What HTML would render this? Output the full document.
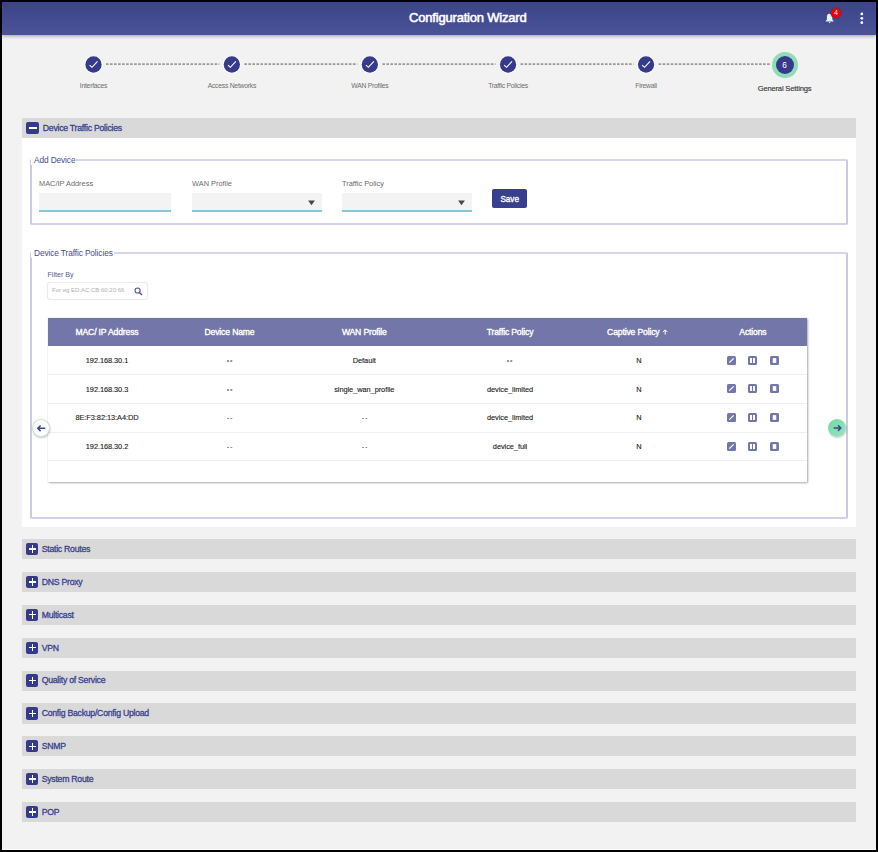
<!DOCTYPE html>
<html><head><meta charset="utf-8">
<style>
*{box-sizing:border-box;margin:0;padding:0}
html,body{width:878px;height:852px;overflow:hidden;background:#000;font-family:"Liberation Sans",sans-serif;font-variant-ligatures:none}
.a{position:absolute}
#page{position:absolute;left:2px;top:2px;width:874px;height:848px;background:#f2f2f2;border-bottom:1px solid #fff}
#hdr{position:absolute;left:2px;top:2px;width:874px;height:32.5px;background:linear-gradient(#3a4288,#4c5499);box-shadow:0 1.5px 3.5px rgba(0,0,0,.32)}
#title{position:absolute;left:405.3px;top:0;width:121px;text-align:center;white-space:nowrap;line-height:32px;color:#fff;font-weight:400;font-size:13px;letter-spacing:-0.2px;-webkit-text-stroke:0.55px #fff}
.step{position:absolute;width:17px;height:17px;border-radius:50%;background:#353b8a;box-shadow:0 0 0 1px #fff}
.step svg{position:absolute;left:0;top:0}
.dash{position:absolute;height:2px;background:repeating-linear-gradient(90deg,#999 0 2.6px,transparent 2.6px 4.05px)}
.lbl{position:absolute;width:120px;text-align:center;font-size:6.8px;letter-spacing:-0.25px;color:#6e6e6e;white-space:nowrap}
.sec{position:absolute;left:22px;width:833.7px;height:20.2px;background:#d9d9d9}
.sec .ic{position:absolute;left:4.2px;top:3.8px;width:12.2px;height:12.3px;border-radius:2px;background:#353b8a}
.sec .t{position:absolute;left:19.7px;top:-0.2px;line-height:20px;font-size:8.7px;font-weight:400;letter-spacing:-0.25px;color:#3a4190;-webkit-text-stroke:0.3px #3a4190;white-space:nowrap}
.plus:before{content:"";position:absolute;left:2.4px;top:5.5px;width:7.4px;height:1.3px;background:#fff}
.plus:after{content:"";position:absolute;left:5.45px;top:2.45px;width:1.3px;height:7.4px;background:#fff}
.minus{width:12.9px!important}.minus:before{content:"";position:absolute;left:2.7px;top:5.6px;width:7.8px;height:1.2px;background:#fff}
#body{position:absolute;left:22px;top:138px;width:834px;height:389px;background:#fff}
.fs{position:absolute;border:2px solid;border-color:#d6d7ea #c9cbe3 #d2d3e8 #c9cbe3;border-radius:2px}
.legend{position:absolute;background:#fff;padding:0 1px 0 3px;font-size:8.3px;letter-spacing:-0.1px;color:#454c94;white-space:nowrap}
.flbl{position:absolute;font-size:7.4px;color:#6a6a6a;white-space:nowrap}
.inp{position:absolute;height:18.5px;background:#f3f3f3;border-bottom:2px solid #86c6dd}
.tri{position:absolute;width:0;height:0;border-left:3.4px solid transparent;border-right:3.4px solid transparent;border-top:4.8px solid #474747}
#save{position:absolute;left:492px;top:189px;width:35px;height:19px;border-radius:2px;background:#383f8e;color:#fff;font-weight:400;font-size:9.4px;-webkit-text-stroke:0.35px #fff;text-align:center;line-height:19.1px}
#save span{display:inline-block;transform:scaleX(0.87)}
#tbl{position:absolute;left:47.5px;top:318px;width:759.5px;height:163.5px;background:#fff;box-shadow:0.5px 1px 2px rgba(0,0,0,.32),0 0 1px rgba(0,0,0,.15)}
#thead{position:absolute;left:0;top:0;width:100%;height:28px;background:#7276a8}
.th{position:absolute;top:0.4px;line-height:28px;color:#fff;font-weight:400;font-size:8.6px;letter-spacing:-0.15px;-webkit-text-stroke:0.35px #fff;white-space:nowrap;width:140px;margin-left:-70px;text-align:center}
.row{position:absolute;left:0;width:100%;height:29px;border-bottom:1px solid #f0f0f0}
.td{position:absolute;top:0.8px;line-height:28px;color:#222;font-size:7.4px;letter-spacing:-0.06px;-webkit-text-stroke:0.12px #222;white-space:nowrap;width:140px;margin-left:-70px;text-align:center}
.act{position:absolute;top:9.5px;width:9px;height:9px;border-radius:1.5px;background:#7276a8}
</style></head><body>
<div id="page"></div>
<div id="hdr"><div id="title">Configuration Wizard</div>
<svg class="a" style="left:823px;top:11.3px" width="10" height="11" viewBox="0 0 10 11"><path d="M4.6 0.8c-1.7 0-2.7 1.3-2.7 3v2.7L0.4 8.4h8.4L7.3 6.5V3.8C7.3 2.1 6.3 0.8 4.6 0.8z" fill="#e3f5f8"/><path d="M3.6 8.9h2L4.6 10.2z" fill="#e3f5f8"/></svg>
<svg class="a" style="left:828px;top:4.6px" width="12" height="12" viewBox="0 0 12 12"><circle cx="6" cy="6" r="5.4" fill="#f20000" stroke="#34407f" stroke-width="0.7"/></svg>
<div class="a" style="left:828px;top:4.6px;width:12px;height:12px;color:#fff;font-size:6.5px;font-weight:400;text-align:center;line-height:12px">4</div>
<svg class="a" style="left:857px;top:9px" width="6" height="16" viewBox="0 0 6 16"><circle cx="2.8" cy="2.9" r="1.4" fill="#fff"/><circle cx="2.8" cy="7.3" r="1.4" fill="#fff"/><circle cx="2.8" cy="11.7" r="1.4" fill="#fff"/></svg>
</div>
<svg class="a" style="left:0;top:40px" width="878" height="50" viewBox="0 40 878 50"><line x1="106.00" y1="64.1" x2="219.35" y2="64.1" stroke="#999" stroke-width="1.8" stroke-dasharray="2.6 1.42"/><line x1="244.35" y1="64.1" x2="357.35" y2="64.1" stroke="#999" stroke-width="1.8" stroke-dasharray="2.6 1.42"/><line x1="382.35" y1="64.1" x2="495.55" y2="64.1" stroke="#999" stroke-width="1.8" stroke-dasharray="2.6 1.42"/><line x1="520.55" y1="64.1" x2="633.55" y2="64.1" stroke="#999" stroke-width="1.8" stroke-dasharray="2.6 1.42"/><line x1="658.55" y1="64.1" x2="770.10" y2="64.1" stroke="#999" stroke-width="1.8" stroke-dasharray="2.6 1.42"/><circle cx="93.5" cy="64.5" r="9.1" fill="#fff" opacity="0.9"/><circle cx="93.5" cy="64.5" r="8.15" fill="#353b8a"/><path d="M89.60 65.05L92.00 67.30L97.50 61.40" fill="none" stroke="#fff" stroke-width="1.1"/><circle cx="231.85" cy="64.5" r="9.1" fill="#fff" opacity="0.9"/><circle cx="231.85" cy="64.5" r="8.15" fill="#353b8a"/><path d="M227.95 65.05L230.35 67.30L235.85 61.40" fill="none" stroke="#fff" stroke-width="1.1"/><circle cx="369.85" cy="64.5" r="9.1" fill="#fff" opacity="0.9"/><circle cx="369.85" cy="64.5" r="8.15" fill="#353b8a"/><path d="M365.95 65.05L368.35 67.30L373.85 61.40" fill="none" stroke="#fff" stroke-width="1.1"/><circle cx="508.05" cy="64.5" r="9.1" fill="#fff" opacity="0.9"/><circle cx="508.05" cy="64.5" r="8.15" fill="#353b8a"/><path d="M504.15 65.05L506.55 67.30L512.05 61.40" fill="none" stroke="#fff" stroke-width="1.1"/><circle cx="646.05" cy="64.5" r="9.1" fill="#fff" opacity="0.9"/><circle cx="646.05" cy="64.5" r="8.15" fill="#353b8a"/><path d="M642.15 65.05L644.55 67.30L650.05 61.40" fill="none" stroke="#fff" stroke-width="1.1"/></svg>
<div class="lbl" style="left:33.5px;top:81.5px">Interfaces</div>
<div class="lbl" style="left:171.85px;top:81.5px">Access Networks</div>
<div class="lbl" style="left:309.85px;top:81.5px">WAN Profiles</div>
<div class="lbl" style="left:448.05px;top:81.5px">Traffic Policies</div>
<div class="lbl" style="left:586.05px;top:81.5px">Firewall</div>
<div class="a" style="left:771.5px;top:52.2px;width:26px;height:26px;border-radius:50%;background:#8fdcb7"></div>
<div class="a" style="left:775.5px;top:56.2px;width:18px;height:18px;border-radius:50%;background:#353b8a;color:#fff;font-size:8.3px;text-align:center;line-height:18px">6</div>
<div class="lbl" style="left:724.5px;top:83.6px;font-size:7.6px;letter-spacing:-0.18px;color:#383838;-webkit-text-stroke:0.15px #383838">General Settings</div>
<div class="sec" style="top:118px"><div class="ic minus"></div><div class="t" style="left:20.8px">Device Traffic Policies</div></div>
<div id="body"></div>
<div class="fs" style="left:30px;top:159px;width:818px;height:65.5px"></div>
<div class="legend" style="left:31px;top:155.3px">Add Device</div>
<div class="flbl" style="left:39px;top:178.6px">MAC/IP Address</div>
<div class="inp" style="left:39px;top:193px;width:132px"></div>
<div class="flbl" style="left:192px;top:178.6px">WAN Profile</div>
<div class="inp" style="left:192px;top:193px;width:130px"><svg class="a" style="left:115px;top:6.5px" width="9" height="6" viewBox="0 0 9 6"><path d="M1.1 0.5H7.9L4.5 5.3z" fill="#474747"/></svg></div>
<div class="flbl" style="left:342px;top:178.6px">Traffic Policy</div>
<div class="inp" style="left:342px;top:193px;width:130px"><svg class="a" style="left:115px;top:6.5px" width="9" height="6" viewBox="0 0 9 6"><path d="M1.1 0.5H7.9L4.5 5.3z" fill="#474747"/></svg></div>
<div id="save"><span>Save</span></div>
<div class="fs" style="left:30px;top:252px;width:818px;height:267px"></div>
<div class="legend" style="left:31px;top:248.3px">Device Traffic Policies</div>
<div class="flbl" style="left:47.5px;top:270.6px;font-size:7.1px;color:#535b9c">Filter By</div>
<div class="a" style="left:47px;top:282.4px;width:100.5px;height:17.6px;border:1px solid #ececec;border-radius:3px;background:#fff;box-shadow:0 0 1px rgba(0,0,0,.08)"></div>
<div class="a" style="left:52px;top:287px;font-size:6px;color:#afafaf;white-space:nowrap">For eg ED:AC:CB:60:20:66</div>
<svg class="a" style="left:133.8px;top:286.6px" width="9" height="9" viewBox="0 0 9 9"><circle cx="3.6" cy="3.5" r="2.55" fill="none" stroke="#4a5399" stroke-width="1.1"/><path d="M5.4 5.4L8 8" stroke="#4a5399" stroke-width="1.4"/></svg>
<div id="tbl"><div id="thead">
<div class="th" style="left:59.5px">MAC/ IP Address</div>
<div class="th" style="left:182px">Device Name</div>
<div class="th" style="left:316.8px">WAN Profile</div>
<div class="th" style="left:462.5px">Traffic Policy</div>
<div class="th" style="left:585.8px">Captive Policy</div>
<div class="th" style="left:705.4px">Actions</div>
<svg class="a" style="left:614.5px;top:10.6px" width="7" height="6" viewBox="0 0 7 6"><path d="M3.2 5.6V0.9M1 3.1L3.2 0.9 5.4 3.1" fill="none" stroke="#fff" stroke-width="1"/></svg>
</div>
<div class="row" style="top:28.0px">
<div class="td" style="left:59.5px">192.168.30.1</div>
<div class="a" style="left:179.25px;top:14.3px;width:2.2px;height:1.6px;background:#999;box-shadow:3.3px 0 0 #999"></div>
<div class="td" style="left:316.8px">Default</div>
<div class="a" style="left:459.75px;top:14.3px;width:2.2px;height:1.6px;background:#999;box-shadow:3.3px 0 0 #999"></div>
<div class="td" style="left:591.5px">N</div>
<svg class="a" style="left:679.3px;top:9.5px" width="9" height="9" viewBox="0 0 9 9"><rect width="9" height="9" rx="1.5" fill="#7276a8"/><path d="M2.3 6.7L6.7 2.3" stroke="#fff" stroke-width="1.2"/></svg>
<svg class="a" style="left:700.5px;top:9.5px" width="9" height="9" viewBox="0 0 9 9"><rect width="9" height="9" rx="1.5" fill="#7276a8"/><rect x="2" y="2" width="5" height="5" fill="#fff"/><rect x="4" y="2" width="1" height="5" fill="#7276a8"/></svg>
<svg class="a" style="left:722.3px;top:9.5px" width="9" height="9" viewBox="0 0 9 9"><rect width="9" height="9" rx="1.5" fill="#7276a8"/><rect x="2.75" y="2.1" width="3.5" height="4.8" fill="#fff"/></svg>
</div>
<div class="row" style="top:56.75px">
<div class="td" style="left:59.5px">192.168.30.3</div>
<div class="a" style="left:179.25px;top:14.3px;width:2.2px;height:1.6px;background:#999;box-shadow:3.3px 0 0 #999"></div>
<div class="td" style="left:316.8px">single_wan_profile</div>
<div class="td" style="left:462.5px">device_limited</div>
<div class="td" style="left:591.5px">N</div>
<svg class="a" style="left:679.3px;top:9.5px" width="9" height="9" viewBox="0 0 9 9"><rect width="9" height="9" rx="1.5" fill="#7276a8"/><path d="M2.3 6.7L6.7 2.3" stroke="#fff" stroke-width="1.2"/></svg>
<svg class="a" style="left:700.5px;top:9.5px" width="9" height="9" viewBox="0 0 9 9"><rect width="9" height="9" rx="1.5" fill="#7276a8"/><rect x="2" y="2" width="5" height="5" fill="#fff"/><rect x="4" y="2" width="1" height="5" fill="#7276a8"/></svg>
<svg class="a" style="left:722.3px;top:9.5px" width="9" height="9" viewBox="0 0 9 9"><rect width="9" height="9" rx="1.5" fill="#7276a8"/><rect x="2.75" y="2.1" width="3.5" height="4.8" fill="#fff"/></svg>
</div>
<div class="row" style="top:85.5px">
<div class="td" style="left:59.5px">8E:F3:82:13:A4:DD</div>
<div class="a" style="left:179.25px;top:14.3px;width:2.2px;height:1.6px;background:#999;box-shadow:3.3px 0 0 #999"></div>
<div class="a" style="left:314.05px;top:14.3px;width:2.2px;height:1.6px;background:#999;box-shadow:3.3px 0 0 #999"></div>
<div class="td" style="left:462.5px">device_limited</div>
<div class="td" style="left:591.5px">N</div>
<svg class="a" style="left:679.3px;top:9.5px" width="9" height="9" viewBox="0 0 9 9"><rect width="9" height="9" rx="1.5" fill="#7276a8"/><path d="M2.3 6.7L6.7 2.3" stroke="#fff" stroke-width="1.2"/></svg>
<svg class="a" style="left:700.5px;top:9.5px" width="9" height="9" viewBox="0 0 9 9"><rect width="9" height="9" rx="1.5" fill="#7276a8"/><rect x="2" y="2" width="5" height="5" fill="#fff"/><rect x="4" y="2" width="1" height="5" fill="#7276a8"/></svg>
<svg class="a" style="left:722.3px;top:9.5px" width="9" height="9" viewBox="0 0 9 9"><rect width="9" height="9" rx="1.5" fill="#7276a8"/><rect x="2.75" y="2.1" width="3.5" height="4.8" fill="#fff"/></svg>
</div>
<div class="row" style="top:114.25px">
<div class="td" style="left:59.5px">192.168.30.2</div>
<div class="a" style="left:179.25px;top:14.3px;width:2.2px;height:1.6px;background:#999;box-shadow:3.3px 0 0 #999"></div>
<div class="a" style="left:314.05px;top:14.3px;width:2.2px;height:1.6px;background:#999;box-shadow:3.3px 0 0 #999"></div>
<div class="td" style="left:462.5px">device_full</div>
<div class="td" style="left:591.5px">N</div>
<svg class="a" style="left:679.3px;top:9.5px" width="9" height="9" viewBox="0 0 9 9"><rect width="9" height="9" rx="1.5" fill="#7276a8"/><path d="M2.3 6.7L6.7 2.3" stroke="#fff" stroke-width="1.2"/></svg>
<svg class="a" style="left:700.5px;top:9.5px" width="9" height="9" viewBox="0 0 9 9"><rect width="9" height="9" rx="1.5" fill="#7276a8"/><rect x="2" y="2" width="5" height="5" fill="#fff"/><rect x="4" y="2" width="1" height="5" fill="#7276a8"/></svg>
<svg class="a" style="left:722.3px;top:9.5px" width="9" height="9" viewBox="0 0 9 9"><rect width="9" height="9" rx="1.5" fill="#7276a8"/><rect x="2.75" y="2.1" width="3.5" height="4.8" fill="#fff"/></svg>
</div>
</div>
<div class="a" style="left:31.5px;top:418.6px;width:18.5px;height:18.4px;border-radius:50%;background:#fff;border:1px solid #bfe8d3;box-shadow:0.5px 1px 2px rgba(0,0,0,.22)"></div>
<svg class="a" style="left:31.5px;top:418.6px" width="19" height="19" viewBox="0 0 19 19"><path d="M13.3 9.3H6.3M8.6 6.5L5.8 9.3L8.6 12.1" fill="none" stroke="#3d4590" stroke-width="1.5"/></svg>
<div class="a" style="left:828px;top:418.8px;width:18.3px;height:18.3px;border-radius:50%;background:linear-gradient(135deg,#6ed9a2,#9be4c2);box-shadow:0.5px 1px 2px rgba(0,0,0,.2)"></div>
<svg class="a" style="left:828px;top:418.8px" width="19" height="19" viewBox="0 0 19 19"><path d="M5.6 9.1H12.3M10 6.3L12.8 9.1L10 11.9" fill="none" stroke="#3d4590" stroke-width="1.5"/></svg>
<div class="sec" style="top:539.2px"><div class="ic plus"></div><div class="t">Static Routes</div></div>
<div class="sec" style="top:572.0500000000001px"><div class="ic plus"></div><div class="t">DNS Proxy</div></div>
<div class="sec" style="top:604.9000000000001px"><div class="ic plus"></div><div class="t">Multicast</div></div>
<div class="sec" style="top:637.75px"><div class="ic plus"></div><div class="t">VPN</div></div>
<div class="sec" style="top:670.6px"><div class="ic plus"></div><div class="t">Quality of Service</div></div>
<div class="sec" style="top:703.45px"><div class="ic plus"></div><div class="t">Config Backup/Config Upload</div></div>
<div class="sec" style="top:736.3000000000001px"><div class="ic plus"></div><div class="t">SNMP</div></div>
<div class="sec" style="top:769.1500000000001px"><div class="ic plus"></div><div class="t">System Route</div></div>
<div class="sec" style="top:802.0px"><div class="ic plus"></div><div class="t">POP</div></div>
</body></html>
